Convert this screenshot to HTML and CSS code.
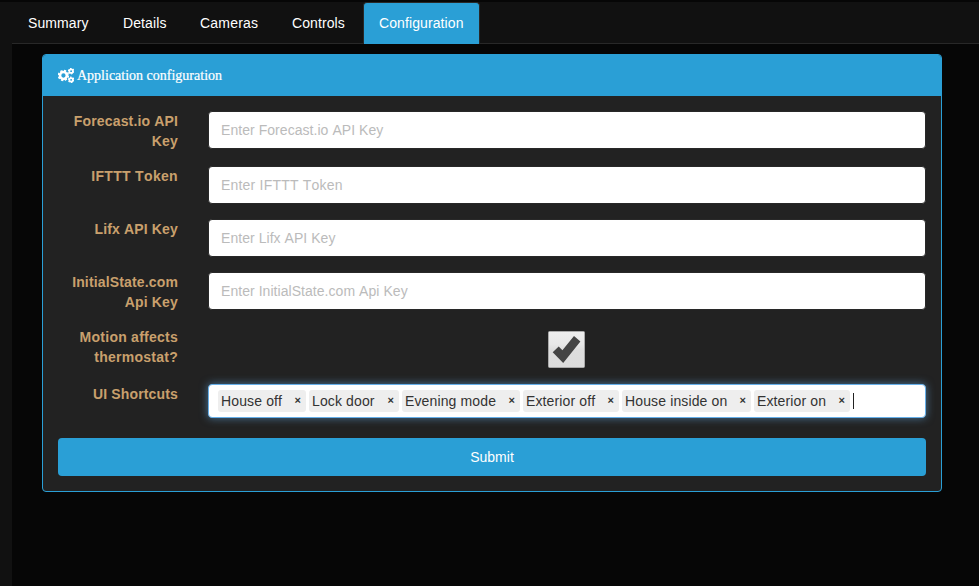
FILE: index.html
```
<!DOCTYPE html>
<html lang="en">
<head>
<meta charset="utf-8">
<title>Configuration</title>
<link rel="stylesheet" href="styles.css">
</head>
<body>
<nav class="tabs">
  <a class="tab">Summary</a>
  <a class="tab">Details</a>
  <a class="tab">Cameras</a>
  <a class="tab">Controls</a>
  <a class="tab active">Configuration</a>
</nav>
<main class="content">
  <section class="panel">
    <header class="panel-heading">
      <svg class="cogs" viewBox="0 0 15 14" fill="none" stroke="#fff">
        <circle cx="5.1" cy="7" r="3.2" stroke-width="2.4"/>
        <circle cx="5.1" cy="7" r="4.6" stroke-width="1.5" stroke-dasharray="2.1 1.513"/>
        <circle cx="12.3" cy="2.9" r="1.7" stroke-width="1.6"/>
        <circle cx="12.3" cy="2.9" r="2.5" stroke-width="1.1" stroke-dasharray="1.4 1.218"/>
        <circle cx="12.3" cy="11.1" r="1.7" stroke-width="1.6"/>
        <circle cx="12.3" cy="11.1" r="2.5" stroke-width="1.1" stroke-dasharray="1.4 1.218"/>
      </svg>
      <span>Application configuration</span>
    </header>
    <form class="panel-body">
      <div class="row"><label>Forecast.io API Key</label><input type="text" placeholder="Enter Forecast.io API Key"></div>
      <div class="row row-wide"><label>IFTTT Token</label><input type="text" placeholder="Enter IFTTT Token"></div>
      <div class="row"><label>Lifx API Key</label><input type="text" placeholder="Enter Lifx API Key"></div>
      <div class="row"><label>InitialState.com Api Key</label><input type="text" placeholder="Enter InitialState.com Api Key"></div>
      <div class="row row-check">
        <label>Motion affects thermostat?</label>
        <div class="check-cell">
          <svg class="check" viewBox="0 0 37 37">
            <defs><linearGradient id="face" x1="0" y1="0" x2="0" y2="1"><stop offset="0" stop-color="#eee"/><stop offset=".35" stop-color="#e8e8e8"/><stop offset=".5" stop-color="#dedede"/><stop offset="1" stop-color="#dcdcdc"/></linearGradient></defs>
            <rect x=".5" y=".5" width="36" height="36" rx="1" fill="url(#face)" stroke="#aaa"/>
            <path d="M4.7 21.3 10.7 15.5 14.4 19.3 26 5 32.4 10.5 15.2 32Z" fill="#444"/>
          </svg>
        </div>
      </div>
      <div class="row row-tags">
        <label>UI Shortcuts</label>
        <div class="tags">
          <span class="tag">House off<b>×</b></span>
          <span class="tag">Lock door<b>×</b></span>
          <span class="tag">Evening mode<b>×</b></span>
          <span class="tag">Exterior off<b>×</b></span>
          <span class="tag">House inside on<b>×</b></span>
          <span class="tag">Exterior on<b>×</b></span>
          <i class="caret"></i>
        </div>
      </div>
      <button class="submit" type="button">Submit</button>
    </form>
  </section>
</main>
</body>
</html>
```
FILE: styles.css
```
* { box-sizing: border-box; }
body {
  margin: 0;
  height: 586px;
  overflow: hidden;
  display: flex;
  flex-direction: column;
  padding-left: 12px;
  border-top: 2px solid #060606;
  background: #111;
  font: 14px/20px "Liberation Sans", Arial, sans-serif;
  font-kerning: none;
  color: #fff;
}
.tabs {
  display: flex;
  gap: 2px;
  height: 42px;
  border-bottom: 1px solid #282828;
}
.tab {
  height: 42px;
  padding: 10px 15px 0;
  border: 1px solid transparent;
  border-bottom: 0;
  border-radius: 4px 4px 0 0;
  letter-spacing: .1px;
}
.tab:nth-child(1) { width: 93px; }
.tab:nth-child(2) { width: 75px; }
.tab:nth-child(3) { width: 90px; letter-spacing: .2px; }
.tab:nth-child(4) { width: 85px; }
.tab.active {
  width: 117px;
  background: #2a9fd6;
  border-color: #282828;
}
.content {
  flex: 1;
  padding: 10px 37px 0 30px;
  background: #060606;
}
.panel {
  width: 900px;
  height: 438px;
  border: 1px solid #2a9fd6;
  border-radius: 4px;
  background: #222;
  overflow: hidden;
}
.panel-heading {
  display: flex;
  align-items: center;
  gap: 4px;
  height: 41px;
  padding: 0 15px;
  background: #2a9fd6;
  font: 14px/20px "Liberation Serif", "Times New Roman", serif;
  -webkit-text-stroke: .2px #fff;
}
.cogs { width: 16px; height: 15px; margin-right: -1px; }
.panel-body { padding: 15px; }
.row {
  display: grid;
  grid-template-columns: 120px 718px;
  column-gap: 30px;
  align-items: start;
  margin-bottom: 15px;
}
.row label {
  color: #c9a06d;
  font-weight: bold;
  text-align: right;
  letter-spacing: .15px;
}
.row input {
  width: 100%;
  height: 38px;
  padding: 8px 12px;
  border: 1px solid #282828;
  border-radius: 4px;
  background: #fff;
  font: inherit;
  font-kerning: none;
  letter-spacing: .05px;
}
.row input::placeholder { color: #bbb; opacity: 1; }
.row-wide label { letter-spacing: .33px; }
.row-wide input { letter-spacing: .2px; }
.row-check { height: 42px; }
.row-check label { letter-spacing: .25px; }
.check-cell { padding: 4px 1px 0 0; text-align: center; }
.check { display: block; width: 37px; height: 37px; margin: 0 auto; }
.row-tags { margin-bottom: 20px; }
.tags {
  display: flex;
  gap: 3px;
  height: 34px;
  padding: 5px 9px;
  border: 1px solid #66afe9;
  border-radius: 4px;
  background: #fff;
  box-shadow: 0 0 8px rgba(102, 175, 233, .6);
  color: #333;
}
.tag {
  display: flex;
  justify-content: space-between;
  height: 22px;
  padding: 1px 5px 0 3px;
  border-radius: 3px;
  background: #eee;
  letter-spacing: .13px;
  white-space: nowrap;
}
.tag:nth-child(1) { width: 88px; }
.tag:nth-child(2) { width: 90px; }
.tag:nth-child(3) { width: 118px; }
.tag:nth-child(4) { width: 96px; }
.tag:nth-child(5) { width: 129px; }
.tag:nth-child(6) { width: 96px; }
.tag b {
  font-size: 11px;
  line-height: 19px;
}
.caret { width: 1px; height: 16px; margin-top: 3px; background: #222; }
.submit {
  display: block;
  width: 100%;
  height: 38px;
  padding: 0;
  border: 0;
  border-radius: 4px;
  background: #2a9fd6;
  color: #fff;
  font: inherit;
}
```
